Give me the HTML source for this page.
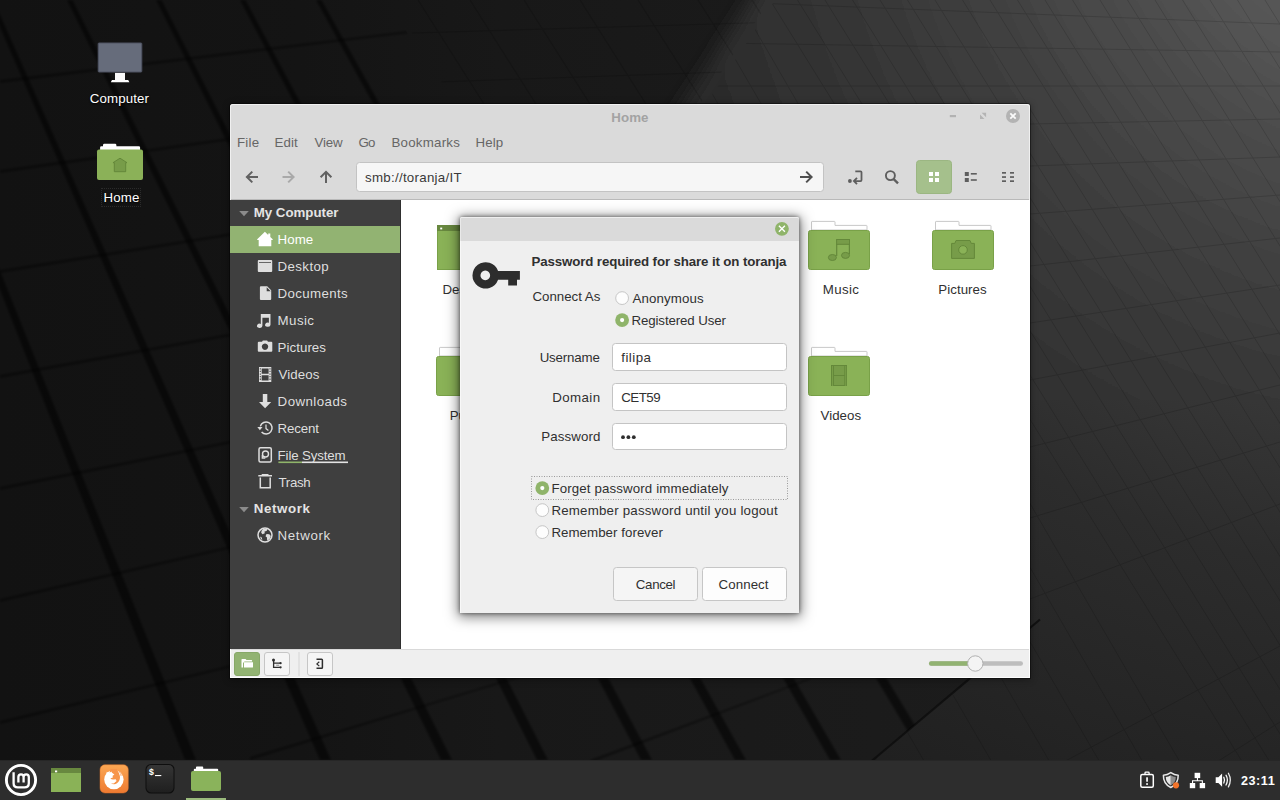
<!DOCTYPE html>
<html>
<head>
<meta charset="utf-8">
<title>Home</title>
<style>
*{box-sizing:border-box;margin:0;padding:0}
html,body{width:1280px;height:800px;overflow:hidden;background:#121212;font-family:"Liberation Sans",sans-serif;font-size:13.3px;color:#303030}
.abs{position:absolute}
#desk{position:absolute;left:0;top:0;width:1280px;height:800px;overflow:hidden;background:#121212}
#bgsvg{position:absolute;left:0;top:0}
.t{position:absolute;white-space:nowrap;line-height:16px;height:16px}
/* panel */
#panel{position:absolute;left:0;top:760px;width:1280px;height:40px;background:#2d2d2d;border-top:1px solid #262626}
/* window */
#win{position:absolute;left:230px;top:104px;width:800px;height:574px;background:#dadada;border-radius:3px 3px 0 0;box-shadow:0 0 0 1px rgba(0,0,0,.4),0 1px 7px 1px rgba(0,0,0,.32)}
#win .hl{position:absolute;left:0;top:0;width:800px;height:96px;border-radius:3px 3px 0 0;border:1px solid #f0f0f0;border-bottom:none;pointer-events:none;z-index:50}
#win .hl2{position:absolute;left:0;top:545px;width:800px;height:29px;border:1px solid #fdfdfd;border-top:none;pointer-events:none;z-index:50}
#side{position:absolute;left:0;top:96px;width:171px;height:449px;background:#3f3f3f;border-right:1px solid #2f2f2f}
#main{position:absolute;left:171px;top:96px;width:629px;height:449px;background:#fff}
#tbline{position:absolute;left:0;top:95px;width:800px;height:1px;background:#b9b9b9}
.menu{top:30px;color:#666;font-size:13.3px}
.si{left:48px;color:#dedede;font-size:13.3px}
.sh{color:#e4e4e4;font-weight:bold;font-size:13.3px}
.fl{color:#303030;font-size:13.3px}
#dlg{position:absolute;left:460px;top:217px;width:339px;height:396px;background:#efefef;border-radius:2px 2px 0 0;box-shadow:0 0 4px rgba(0,0,0,.55),0 2px 13px 2px rgba(0,0,0,.5)}
.dt{color:#303030;font-size:13.3px}
#status{position:absolute;left:0;top:545px;width:800px;height:29px;background:#efefef;border-top:1px solid #d9d9d9}
/*FIT0*/
#title{letter-spacing:0.134px!important;left:0.40px!important;top:6.00px!important}
#mFile{letter-spacing:0.291px!important;left:6.90px!important;top:31.00px!important}
#mEdit{letter-spacing:0.133px!important;left:44.40px!important;top:31.00px!important}
#mView{letter-spacing:-0.186px!important;left:84.60px!important;top:31.00px!important}
#mGo{letter-spacing:-0.960px!important;left:128.60px!important;top:31.00px!important}
#mBook{letter-spacing:0.225px!important;left:161.50px!important;top:31.00px!important}
#mHelp{letter-spacing:0.105px!important;left:245.50px!important;top:31.00px!important}
#loc{letter-spacing:0.279px!important;left:135.00px!important;top:65.50px!important}
#lblComputer{letter-spacing:0.114px!important;left:59.50px!important;top:90.50px!important}
#lblHome{letter-spacing:0.133px!important;left:61.50px!important;top:190.00px!important}
#sMyComputer{letter-spacing:-0.016px!important;left:23.70px!important;top:5.00px!important}
#sHome{letter-spacing:0.024px!important;left:47.60px!important;top:32.00px!important}
#sDesktop{letter-spacing:0.374px!important;left:47.60px!important;top:59.00px!important}
#sDocuments{letter-spacing:0.340px!important;left:47.60px!important;top:86.00px!important}
#sMusic{letter-spacing:0.420px!important;left:47.60px!important;top:113.00px!important}
#sPictures{letter-spacing:0.046px!important;left:47.60px!important;top:140.00px!important}
#sVideos{letter-spacing:0.080px!important;left:48.60px!important;top:167.00px!important}
#sDownloads{letter-spacing:0.440px!important;left:47.60px!important;top:194.00px!important}
#sRecent{letter-spacing:-0.144px!important;left:47.60px!important;top:221.00px!important}
#sFileSystem{letter-spacing:-0.144px!important;left:47.60px!important;top:248.00px!important}
#sTrash{letter-spacing:-0.380px!important;left:48.60px!important;top:275.00px!important}
#sNetworkH{letter-spacing:0.611px!important;left:23.70px!important;top:301.00px!important}
#sNetwork{letter-spacing:0.627px!important;left:47.60px!important;top:328.00px!important}
#fMusic{letter-spacing:0.320px!important;left:410.00px!important;top:82.00px!important}
#fPictures{letter-spacing:0.068px!important;left:521.50px!important;top:82.00px!important}
#fVideos{letter-spacing:0.032px!important;left:409.80px!important;top:208.00px!important}
#fDesktop{letter-spacing:-0.025px!important;left:41.40px!important;top:82.00px!important}
#fPublic{left:48.70px!important;top:208.00px!important}
#dHead{letter-spacing:-0.128px!important;left:71.50px!important;top:37.30px!important}
#dConnectAs{letter-spacing:-0.016px!important;left:72.50px!important;top:71.50px!important}
#dAnon{letter-spacing:0.125px!important;left:172.50px!important;top:74.00px!important}
#dReg{letter-spacing:-0.118px!important;left:171.50px!important;top:96.00px!important}
#dUser{letter-spacing:-0.160px!important;left:39.70px!important;top:133.00px!important}
#dDomain{letter-spacing:0.432px!important;left:40.60px!important;top:173.00px!important}
#dPass{letter-spacing:0.093px!important;left:40.50px!important;top:212.30px!important}
#dFilipa{letter-spacing:0.480px!important;left:161.25px!important;top:133.00px!important}
#dCET{letter-spacing:-0.510px!important;left:161.25px!important;top:173.00px!important}
#dForget{letter-spacing:0.131px!important;left:91.40px!important;top:264.00px!important}
#dRemU{letter-spacing:0.205px!important;left:91.40px!important;top:286.00px!important}
#dRemF{letter-spacing:0.043px!important;left:91.40px!important;top:308.00px!important}
#dCancel{letter-spacing:-0.336px!important;left:153.50px!important;top:360.00px!important}
#dConnect{letter-spacing:0.067px!important;left:241.60px!important;top:360.00px!important}
#clock{letter-spacing:0.550px!important;left:1241.00px!important;top:12.00px!important}
/*FIT1*/
</style>
</head>
<body>
<div id="desk">
<!--BG0--><svg id="bgsvg" width="1280" height="800" viewBox="0 0 1280 800">
<defs>
<radialGradient id="lg" gradientUnits="userSpaceOnUse" cx="1400" cy="-150" r="1500">
<stop offset="0" stop-color="#606060"/><stop offset=".137" stop-color="#565656"/><stop offset=".24" stop-color="#474747"/><stop offset=".30" stop-color="#3f3f3f"/><stop offset=".36" stop-color="#383838"/><stop offset=".42" stop-color="#323232"/><stop offset=".48" stop-color="#2c2c2c"/><stop offset=".59" stop-color="#262626"/><stop offset=".66" stop-color="#222222"/><stop offset=".79" stop-color="#1b1b1b"/><stop offset="1" stop-color="#141414"/>
</radialGradient>
<linearGradient id="dk" gradientUnits="userSpaceOnUse" x1="0" y1="0" x2="1000" y2="0"><stop offset="0" stop-color="#121212"/><stop offset=".3" stop-color="#141414"/><stop offset=".5" stop-color="#181818"/><stop offset="1" stop-color="#1c1c1c"/></linearGradient>
<filter id="bl" x="-10%" y="-10%" width="120%" height="120%"><feGaussianBlur stdDeviation="9"/></filter>
<filter id="b2" x="-5%" y="-5%" width="110%" height="110%"><feGaussianBlur stdDeviation="1.3"/></filter>
<clipPath id="cpT"><rect x="0" y="0" width="1280" height="400"/></clipPath>
<clipPath id="cpL"><polygon points="0,0 388,0 452,110 1000,110 1000,653 880,754 870,770 0,770"/></clipPath>
<clipPath id="cpM"><polygon points="392,0 770,0 700,104 455,104"/></clipPath>
<clipPath id="cpR"><polygon points="775,0 1280,0 1280,770 872,770 882,754 1002,653 1002,400 510,400"/></clipPath>
</defs>
<rect width="1280" height="800" fill="url(#dk)"/>
<g clip-path="url(#cpT)"><polygon points="770,-30 1320,-30 1320,430 470,430" fill="url(#lg)" filter="url(#bl)"/></g>
<polygon points="1000,400 1320,400 1320,830 830,830 880,754 1000,653" fill="url(#lg)"/>
<path d="M868 764 L880 754 L1040 619.5" stroke="#0c0c0c" stroke-width="2.2" fill="none" opacity=".8"/>
<g clip-path="url(#cpL)" filter="url(#b2)" fill="#050505" stroke="none">
<path d="M-114 0 L-108.5 0 L196 760 L185 760z" opacity=".55"/>
<path d="M-12 0 L-6.5 0 L331 760 L320 760z" opacity=".55"/>
<path d="M67 0 L72.5 0 L452 760 L441 760z" opacity=".55"/>
<path d="M156 0 L161.5 0 L548 760 L537 760z" opacity=".55"/>
<path d="M240 0 L245.5 0 L652 760 L641 760z" opacity=".55"/>
<path d="M316 0 L321.5 0 L746 760 L735 760z" opacity=".55"/>
<path d="M395 0 L400.5 0 L841 760 L830 760z" opacity=".55"/>
<path d="M470 0 L475.5 0 L936 760 L925 760z" opacity=".55"/>
<path d="M545 0 L550.5 0 L1031 760 L1020 760z" opacity=".55"/>
<path d="M620 0 L625.5 0 L1126 760 L1115 760z" opacity=".55"/>
<path d="M690 0 L695.5 0 L1221 760 L1210 760z" opacity=".55"/>
<path d="M0 80 L0 83 L800 -14.5 L800 -16z" opacity=".42"/>
<path d="M0 170 L0 173 L800 59.5 L800 58z" opacity=".42"/>
<path d="M0 270 L0 273 L800 143.5 L800 142z" opacity=".42"/>
<path d="M0 375 L0 378 L800 232.5 L800 231z" opacity=".42"/>
<path d="M0 487 L0 490 L700 348.5 L700 347z" opacity=".42"/>
<path d="M0 599 L0 602 L600 462.5 L600 461z" opacity=".42"/>
<path d="M0 721 L0 724 L500 601.5 L500 600z" opacity=".42"/>
<path d="M250 757 L250 760 L520 677.5 L520 676z" opacity=".42"/>
<path d="M590 760 L590 763 L810 679.5 L810 678z" opacity=".42"/>
</g>
<g clip-path="url(#cpM)" fill="none" stroke="#000" stroke-width="1.2" opacity=".15">
<path d="M418 0 L484 104"/>
<path d="M470 0 L536 104"/>
<path d="M524 0 L590 104"/>
<path d="M580 0 L646 104"/>
<path d="M638 0 L704 104"/>
<path d="M698 0 L764 104"/>
<path d="M752 0 L818 104"/>
<path d="M380 34 L780 22"/>
<path d="M380 84 L780 70"/>
</g>
<g clip-path="url(#cpR)" fill="none" stroke="#000" stroke-width="1" opacity=".14">
<path d="M770.0 0 L1266.0 800"/>
<path d="M797.5 0 L1293.5 800"/>
<path d="M825.0 0 L1321.0 800"/>
<path d="M852.5 0 L1348.5 800"/>
<path d="M880.0 0 L1376.0 800"/>
<path d="M907.5 0 L1403.5 800"/>
<path d="M935.0 0 L1431.0 800"/>
<path d="M962.5 0 L1458.5 800"/>
<path d="M990.0 0 L1486.0 800"/>
<path d="M1017.5 0 L1513.5 800"/>
<path d="M1045.0 0 L1541.0 800"/>
<path d="M1072.5 0 L1568.5 800"/>
<path d="M1100.0 0 L1596.0 800"/>
<path d="M1127.5 0 L1623.5 800"/>
<path d="M1155.0 0 L1651.0 800"/>
<path d="M1182.5 0 L1678.5 800"/>
<path d="M1210.0 0 L1706.0 800"/>
<path d="M1237.5 0 L1733.5 800"/>
<path d="M1265.0 0 L1761.0 800"/>
<path d="M1292.5 0 L1788.5 800"/>
<path d="M738.0 0 L1202.0 800"/>
<path d="M700.9 0 L1164.9 800"/>
<path d="M657.8 0 L1121.8 800"/>
<path d="M607.9 0 L1071.9 800"/>
<path d="M549.9 0 L1013.9 800"/>
<path d="M482.7 0 L946.7 800"/>
<path d="M404.8 0 L868.8 800"/>
<path d="M314.3 0 L778.3 800"/>
<path d="M209.4 0 L673.4 800"/>
<path d="M87.7 0 L551.7 800"/>
<path d="M-53.5 0 L410.5 800"/>
<path d="M-217.2 0 L246.8 800"/>
<path d="M700 0.8 L1280 24.0"/>
<path d="M700 42.7 L1280 52.0"/>
<path d="M700 86.0 L1280 86.0"/>
<path d="M700 130.6 L1280 119.0"/>
<path d="M700 177.9 L1280 157.0"/>
<path d="M700 239.1 L1280 195.0"/>
<path d="M700 303.0 L1280 238.0"/>
<path d="M700 373.2 L1280 285.0"/>
<path d="M700 442.0 L1280 333.0"/>
<path d="M700 528.8 L1280 385.0"/>
<path d="M700 618.3 L1280 442.0"/>
<path d="M700 724.4 L1280 504.0"/>
<path d="M700 956.9 L1280 646.0"/>
<path d="M700 1088.6 L1280 722.0"/>
<path d="M700 1240.8 L1280 800.0"/>
</g>
</svg><!--BG1-->
<!--DESKICONS0--><svg class="abs" style="left:80px;top:30px" width="90" height="160" viewBox="80 30 90 160">
<rect x="98.2" y="43" width="43.6" height="29" rx=".8" fill="#666c7b" stroke="#4e5363" stroke-width="1"/>
<rect x="115" y="72.9" width="10" height="7.6" fill="#fafafa"/>
<path d="M112 80 h16.2 l1.2 2.2 h-18.6z" fill="#fff"/>
<path d="M103 145.2 q0 -1.4 1.4 -1.4 h10.6 q1.4 0 1.4 1.4 v1.1 h22.4 q1.3 0 1.3 1.3 v3 h-40 v-3 q0 -1.3 1.3 -1.3 h1.600z" fill="#fff"/>
<rect x="97" y="149.5" width="46" height="30.5" rx="2" fill="#8bb158"/>
<path d="M120 158.2 L127 162.7 h-1.3 v9 h-11.4 v-9 h-1.300z" fill="#779c49" stroke="#64883a" stroke-width="1" stroke-linejoin="round"/>
</svg>
<div class="t" id="lblComputer" style="left:60px;top:89px;width:120px;text-align:center;color:#fff;font-size:13.300px;text-shadow:0 1px 2px #000">Computer</div>
<div class="abs" style="left:101px;top:188px;width:40px;height:19px;border:1px dotted #2b2b2b"></div>
<div class="t" id="lblHome" style="left:61px;top:189px;width:120px;text-align:center;color:#fff;font-size:13.300px;text-shadow:0 1px 2px #000">Home</div>
<!--DESKICONS1-->
<div id="win">
  <div id="tbline"></div>
  <!--WINCHROME0--><div class="t" id="title" style="left:0;top:5px;width:799px;text-align:center;font-weight:bold;color:#a3a3a3;font-size:13.300px">Home</div>
<svg class="abs" style="left:700px;top:0" width="100" height="30" viewBox="930 104 100 30">
<rect x="949.8" y="115" width="6.2" height="2.2" fill="#b2b2b2"/>
<path d="M981.6 112.8 h4.5 v4.5z M980 114.6 v4.5 h4.5z" fill="#b4b4b4"/>
<circle cx="1013" cy="116" r="7" fill="#b3b3b3"/>
<path d="M1010.3 113.3 l5.4 5.4 M1015.7 113.3 l-5.4 5.4" stroke="#fafafa" stroke-width="1.8" stroke-linecap="butt"/>
</svg>
<div class="t menu" id="mFile" style="left:9px">File</div>
<div class="t menu" id="mEdit" style="left:45px">Edit</div>
<div class="t menu" id="mView" style="left:84px">View</div>
<div class="t menu" id="mGo" style="left:129px">Go</div>
<div class="t menu" id="mBook" style="left:162px">Bookmarks</div>
<div class="t menu" id="mHelp" style="left:246px">Help</div>
<svg class="abs" style="left:0;top:56px" width="800" height="40" viewBox="230 160 800 40">
<g fill="none" stroke="#616161" stroke-width="2" stroke-linecap="butt" stroke-linejoin="miter">
<path d="M258 177 H247.5 M252.3 171.6 L246.9 177 L252.3 182.4"/>
<path d="M282.5 177 H293 M288.2 171.6 L293.6 177 L288.2 182.4" stroke="#a9a9a9"/>
<path d="M326 183 V172.5 M320.6 177.3 L326 171.9 L331.4 177.3"/>
</g>
<rect x="356.5" y="162.5" width="467" height="29" rx="3" fill="#f6f6f6" stroke="#c3c3c3"/>
<path d="M800 177 H811 M806.2 171.6 L811.6 177 L806.2 182.4" fill="none" stroke="#4f4f4f" stroke-width="2"/>
<!-- toggle location -->
<circle cx="849.9" cy="181" r="1.9" fill="#5e5e5e"/>
<path d="M855.3 171.3 h5.2 q1 0 1 1 v7.8 q0 1 -1 1 h-6.3 M857 177.9 l-3.1 3.1 l3.1 3.1" fill="none" stroke="#5e5e5e" stroke-width="1.8"/>
<!-- search -->
<circle cx="890.4" cy="175.6" r="4.5" fill="none" stroke="#5e5e5e" stroke-width="1.9"/>
<path d="M893.7 179.1 l4.3 4.3" stroke="#5e5e5e" stroke-width="2.3"/>
<!-- grid btn -->
<rect x="916.5" y="160.5" width="35" height="33" rx="3" fill="#a5c08c" stroke="#9bb682"/>
<g fill="#fff"><rect x="929" y="172" width="4" height="4"/><rect x="935" y="172" width="4" height="4"/><rect x="929" y="178" width="4" height="4"/><rect x="935" y="178" width="4" height="4"/></g>
<!-- list -->
<g fill="#5e5e5e"><rect x="964.8" y="172" width="4" height="4"/><rect x="964.8" y="178" width="4" height="4"/><rect x="970.8" y="173" width="6" height="1.6"/><rect x="970.8" y="179.2" width="6" height="1.6"/></g>
<!-- compact -->
<g fill="#5e5e5e"><rect x="1002" y="172" width="4" height="1.7"/><rect x="1002" y="176.2" width="4" height="1.7"/><rect x="1002" y="180.3" width="4" height="1.7"/><rect x="1010" y="172" width="4" height="1.7"/><rect x="1010" y="176.2" width="4" height="1.7"/><rect x="1010" y="180.3" width="4" height="1.7"/></g>
</svg>
<div class="t" id="loc" style="left:135px;top:65px;color:#3a3a3a;font-size:13.300px">smb://toranja/IT</div>
<!--WINCHROME1-->
  <div id="side"><!--SIDEBAR0--><div class="abs" style="left:0;top:26px;width:170px;height:27px;background:#92b372"></div>
<svg class="abs" style="left:0;top:0" width="170" height="360" viewBox="230 200 170 360">
<path d="M239.2 211 h9.6 l-4.8 5.2z" fill="#8b8b8b"/>
<path d="M239.2 507 h9.6 l-4.8 5.2z" fill="#8b8b8b"/>
<!-- home -->
<path d="M264.9 231.8 l3.3 3.1 v-1.3 h2.1 v3.3 l2.4 2.3 v.7 h-1.4 v6.3 h-12.6 v-6.3 h-1.5 v-.7z" fill="#fff"/>
<g fill="#dedede">
<!-- desktop -->
<path d="M258.8 260 h12.4 q1 0 1 1 v10 q0 1 -1 1 h-12.4 q-1 0 -1 -1 v-10 q0 -1 1 -1z M259 262.3 v0.8 h12 v-.8z" fill-rule="evenodd"/>
<!-- documents -->
<path d="M260.9 286.3 h6.3 l4 4 v8.7 q0 1 -1 1 h-9.3 q-1 0 -1 -1 v-11.7 q0 -1 1 -1z M266.7 287.3 v4 h4z" fill-rule="evenodd"/>
<!-- music -->
<path d="M260.8 314 h9.7 v10.7 a2.7 2.1 0 1 1 -1.6 -1.9 v-5 h-6.5 v8 a2.7 2.1 0 1 1 -1.6 -1.900z"/>
<!-- pictures -->
<path d="M262 341.8 l.9 -1.4 h4.2 l.9 1.4 h3.3 q1 0 1 1 v8 q0 1 -1 1 h-12.5 q-1 0 -1 -1 v-8 q0 -1 1 -1z M265 343.5 a3.2 3.2 0 1 0 .01 0z" fill-rule="evenodd"/>
<!-- videos -->
<path d="M259 367 h12.3 v15 h-12.300z M261.7 368.4 v5.4 h6.9 v-5.400z M261.7 375.2 v5.4 h6.9 v-5.400z M259.8 368.2 v1.3 h1 v-1.300z M259.8 370.8 v1.3 h1 v-1.300z M259.8 373.4 v1.3 h1 v-1.300z M259.8 376 v1.3 h1 v-1.300z M259.8 378.6 v1.3 h1 v-1.300z M269.5 368.2 v1.3 h1 v-1.300z M269.5 370.8 v1.3 h1 v-1.300z M269.5 373.4 v1.3 h1 v-1.300z M269.5 376 v1.3 h1 v-1.300z M269.5 378.6 v1.3 h1 v-1.300z" fill-rule="evenodd"/>
<!-- downloads -->
<path d="M262.8 394 h4.5 v8 h3.9 l-6.1 6.2 l-6.1 -6.2 h3.800z"/>
<!-- trash lid -->
<path d="M258.3 475 h13.7 v1.5 h-13.700z M261.7 474 h6.8 v1.2 h-6.800z"/>
</g>
<g fill="none" stroke="#dedede" stroke-width="1.5">
<!-- recent -->
<path d="M260.3 426.4 a6 6 0 1 1 1.3 5.6" />
<path d="M266 424.6 v4 l2.4 1.8" stroke-width="1.2"/>
<!-- filesystem -->
<rect x="259" y="447.8" width="12.3" height="14.3" rx="1.5"/>
<circle cx="265.5" cy="454" r="3" stroke-width="1.4"/><path d="M262.3 455 v3 h3" stroke-width="1.3"/>
<!-- trash body -->
<path d="M260.3 477.5 v10.3 h9.9 v-10.3"/>
<!-- network -->
<circle cx="265" cy="535.1" r="7"/>
</g>
<path d="M257.3 427 h5.2 l-2.6 3.300z" fill="#dedede"/>
<path d="M263.2 529 q2.5 -.8 4.3 .3 l-1 1.8 l-2 .4 l.3 1.7 l-2.3 1 l-1.3 -1.4 q0 -2.5 2 -3.800z M266.5 534 l2.8 .3 l1.5 1.6 l-1 2.8 l-2.2 2 q-1 -1.5 -.6 -3.2 l-1.5 -1.200z M260 536.5 l1.8 1 l.5 2.5 q-1.8 -1 -2.3 -3.500z" fill="#dedede"/>
<!-- filesystem usage bar -->
<rect x="278.4" y="461.5" width="23.6" height="1.6" fill="#8fb46a"/>
<rect x="302" y="461.5" width="46" height="1.6" fill="#e4e4e4"/>
</svg>
<div class="t sh" id="sMyComputer" style="left:24px;top:4px">My Computer</div>
<div class="t si" id="sHome" style="top:31px;color:#fff">Home</div>
<div class="t si" id="sDesktop" style="top:58px">Desktop</div>
<div class="t si" id="sDocuments" style="top:85px">Documents</div>
<div class="t si" id="sMusic" style="top:112px">Music</div>
<div class="t si" id="sPictures" style="top:139px">Pictures</div>
<div class="t si" id="sVideos" style="top:166px">Videos</div>
<div class="t si" id="sDownloads" style="top:193px">Downloads</div>
<div class="t si" id="sRecent" style="top:220px">Recent</div>
<div class="t si" id="sFileSystem" style="top:247px">File System</div>
<div class="t si" id="sTrash" style="top:274px">Trash</div>
<div class="t sh" id="sNetworkH" style="left:24px;top:300px">Network</div>
<div class="t si" id="sNetwork" style="top:327px">Network</div>
<!--SIDEBAR1--></div>
  <div id="main"><!--MAIN0--><svg class="abs" style="left:0;top:0" width="629" height="448" viewBox="401 200 629 448">
<defs>
<g id="fold">
<path d="M4.1 -8.6 q-.6 0 -.6 .6 v8 h55.5 v-4 q0 -.6 -.6 -.6 h-31.4 v-3.4 q0 -.6 -.6 -.6z" fill="#fff" stroke="#c9c9c9" stroke-width="1"/>
<rect x=".5" y=".5" width="61" height="39" rx="2" fill="#8ab257" stroke="#79a148" stroke-width="1"/>
</g>
</defs>
<!-- Desktop -->
<rect x="437.5" y="225.5" width="61" height="44" fill="#8ab257" stroke="#79a148"/>
<rect x="437" y="225" width="62" height="6" fill="#68883f"/>
<rect x="440.2" y="227.6" width="2" height="1.8" fill="#fff"/>
<!-- Music -->
<use href="#fold" x="808" y="230"/>
<g fill="#779c49" stroke="#64883a" stroke-width="1">
<rect x="836.6" y="239.5" width="12.9" height="4.8"/>
<path d="M836.7 244 V256 M849.4 244 V254.2" stroke-width="1.2" fill="none"/>
<ellipse cx="832.4" cy="257.5" rx="4" ry="3"/><ellipse cx="845.5" cy="255.4" rx="4" ry="3"/>
</g>
<!-- Pictures -->
<use href="#fold" x="932" y="230"/>
<path d="M951.6 243.4 h3.2 l1.2 -2.9 h14 l1.2 2.9 h3.2 v15 h-22.800z" fill="#779c49" stroke="#64883a" stroke-width="1" stroke-linejoin="round"/>
<circle cx="963" cy="249.9" r="4.3" fill="#8ab257" stroke="#64883a" stroke-width="1"/>
<!-- Public (mostly hidden) -->
<use href="#fold" x="436" y="356"/>
<!-- Videos -->
<use href="#fold" x="808" y="356"/>
<rect x="831" y="365" width="16" height="21" fill="#64883a"/>
<rect x="834" y="366" width="10.3" height="9" fill="#779c49"/><rect x="834" y="376" width="10.3" height="9" fill="#779c49"/>
<path d="M832.5 366.5 V386 M845.7 366.5 V386" stroke="#8ab257" stroke-width="1" stroke-dasharray="1 1" fill="none"/>
</svg>
<div class="t fl" id="fDesktop" style="left:42px;top:81px">Desktop</div>
<div class="t fl" id="fMusic" style="left:409px;top:81px;width:60px;text-align:center">Music</div>
<div class="t fl" id="fPictures" style="left:522px;top:81px;width:80px;text-align:center">Pictures</div>
<div class="t fl" id="fPublic" style="left:49px;top:207px">Public</div>
<div class="t fl" id="fVideos" style="left:409px;top:207px;width:60px;text-align:center">Videos</div>
<!--MAIN1--></div>
  <div id="status"><!--STATUS0--><svg class="abs" style="left:0;top:-2px" width="800" height="30" viewBox="230 648 800 30">
<rect x="234.5" y="652.5" width="25" height="23" rx="2.5" fill="#92b372" stroke="#87a868"/>
<path d="M241.5 659.6 q0 -.6 .6 -.6 h3.4 l1 1 h5 q.6 0 .6 .6 v.9 h-7.6 l-1.5 1.5 v4.4 h-1.500z M244 662.2 h9 v4.7 q0 .6 -.6 .6 h-8.400z" fill="#fff"/>
<rect x="264.5" y="652.5" width="25" height="23" rx="2.5" fill="#f5f5f5" stroke="#c6c6c6"/>
<g fill="none" stroke="#2e2e2e" stroke-width="1.3"><path d="M273.6 660.5 v6.8 h6.6 M273.6 663.2 h6.6"/><path d="M276.2 665.2 h3" stroke="#8a8a8a" stroke-width="1"/></g><circle cx="273.5" cy="660.1" r="1.5" fill="#2e2e2e"/><circle cx="280.6" cy="663.2" r="1.1" fill="#2e2e2e"/><circle cx="280.6" cy="667.3" r="1.1" fill="#2e2e2e"/>
<rect x="298.5" y="652" width="1" height="24" fill="#d6d6d6"/>
<rect x="307.5" y="652.5" width="25" height="23" rx="2.5" fill="#f5f5f5" stroke="#c6c6c6"/>
<path d="M316.5 659.3 h5.1 q.8 0 .8 .8 v7.4 q0 .8 -.8 .8 h-5.1" fill="none" stroke="#2e2e2e" stroke-width="1.5"/>
<path d="M319.3 661.7 l-2.4 2.2 l2.4 2.2" fill="none" stroke="#2e2e2e" stroke-width="1.2"/>
<rect x="929" y="661.3" width="94" height="4.5" rx="2.2" fill="#bdbdbd"/>
<rect x="929" y="661.3" width="46" height="4.5" rx="2.2" fill="#92b372"/>
<circle cx="975.3" cy="663.5" r="7.7" fill="#f4f4f4" stroke="#b0b0b0" stroke-width="1"/>
</svg>
<!--STATUS1--></div>
  <div class="hl"></div><div class="hl2"></div>
</div>
<!--DIALOG0--><div id="dlg">
<div class="abs" style="left:0;top:0;width:339px;height:24px;background:#dadada;border-radius:2px 2px 0 0;border-top:1px solid #efefef;border-left:1px solid #e9e9e9"></div><div class="abs" style="left:0;top:24px;width:1px;height:372px;background:#f8f8f8"></div>
<svg class="abs" style="left:0;top:0" width="339" height="396" viewBox="460 217 339 396">
<circle cx="781.9" cy="228.8" r="6.9" fill="#8fb46a"/>
<path d="M778.9 225.8 l6 6 M784.9 225.8 l-6 6" stroke="#fff" stroke-width="1.35"/>
<!-- key -->
<path d="M498.1 271 A13.2 13.2 0 1 0 498.1 279.8 H508.2 V285.6 H517 V279.8 H519.9 V271z M485.3 270.6 a4.8 4.8 0 1 1 -.01 0z" fill="#2d2d2d" fill-rule="evenodd"/>
<!-- radios -->
<circle cx="622.1" cy="298.1" r="6.4" fill="#fdfdfd" stroke="#c6c6c6"/>
<circle cx="622.1" cy="320.1" r="6.9" fill="#8fb46a"/><circle cx="622.1" cy="320.1" r="2.1" fill="#fff"/>
<!-- entries -->
<rect x="612.5" y="343.5" width="174" height="27" rx="3" fill="#fff" stroke="#c4c4c4"/>
<rect x="612.5" y="383.5" width="174" height="27" rx="3" fill="#fff" stroke="#c4c4c4"/>
<rect x="612.5" y="423.5" width="174" height="26" rx="3" fill="#fff" stroke="#c4c4c4"/>
<circle cx="623" cy="437.2" r="1.9" fill="#2e2e2e"/><circle cx="628.4" cy="437.2" r="1.9" fill="#2e2e2e"/><circle cx="633.8" cy="437.2" r="1.9" fill="#2e2e2e"/>
<!-- focus rect -->
<rect x="531.5" y="476.5" width="256" height="23" fill="none" stroke="#9a9a9a" stroke-dasharray="1 1.5"/>
<circle cx="542.3" cy="488.1" r="6.9" fill="#8fb46a"/><circle cx="542.3" cy="488.1" r="2.1" fill="#fff"/>
<circle cx="542.3" cy="510.1" r="6.4" fill="#fdfdfd" stroke="#c6c6c6"/>
<circle cx="542.3" cy="532.1" r="6.4" fill="#fdfdfd" stroke="#c6c6c6"/>
<!-- buttons -->
<rect x="613.5" y="567.5" width="84" height="33" rx="3" fill="#f5f5f5" stroke="#c6c6c6"/>
<rect x="702.5" y="567.5" width="84" height="33" rx="3" fill="#fdfdfd" stroke="#c6c6c6"/>
</svg>
<div class="t dt" id="dHead" style="left:72px;top:36px;font-weight:bold">Password required for share it on toranja</div>
<div class="t dt" id="dConnectAs" style="left:72px;top:70px">Connect As</div>
<div class="t dt" id="dAnon" style="left:172px;top:73px">Anonymous</div>
<div class="t dt" id="dReg" style="left:172px;top:95px">Registered User</div>
<div class="t dt" id="dUser" style="left:40px;top:132px;width:100px;text-align:right">Username</div>
<div class="t dt" id="dDomain" style="left:40px;top:172px;width:100px;text-align:right">Domain</div>
<div class="t dt" id="dPass" style="left:40px;top:211px;width:100px;text-align:right">Password</div>
<div class="t dt" id="dFilipa" style="left:161px;top:132px">filipa</div>
<div class="t dt" id="dCET" style="left:161px;top:172px">CET59</div>
<div class="t dt" id="dForget" style="left:92px;top:263px">Forget password immediately</div>
<div class="t dt" id="dRemU" style="left:92px;top:285px">Remember password until you logout</div>
<div class="t dt" id="dRemF" style="left:92px;top:307px">Remember forever</div>
<div class="t dt" id="dCancel" style="left:154px;top:359px;width:84px;text-align:center">Cancel</div>
<div class="t dt" id="dConnect" style="left:243px;top:359px;width:84px;text-align:center">Connect</div>
</div>
<!--DIALOG1-->
<div id="panel"><!--PANEL0--><svg class="abs" style="left:0;top:-1px" width="1280" height="41" viewBox="0 760 1280 41">
<defs>
<linearGradient id="ffg" x1="0" y1="0" x2="0" y2="1"><stop offset="0" stop-color="#fba753"/><stop offset="1" stop-color="#ee7a31"/></linearGradient>
<linearGradient id="tmg" x1="0" y1="0" x2="0" y2="1"><stop offset="0" stop-color="#353535"/><stop offset="1" stop-color="#1f1f1f"/></linearGradient>
</defs>
<!-- mint menu -->
<circle cx="21" cy="780" r="14.6" fill="none" stroke="#fff" stroke-width="2.9"/>
<path d="M13.6 772.2 V783.2 Q13.6 787.4 17.8 787.4 H24.6 Q28.8 787.4 28.8 783.2 V777 Q28.8 774.3 26.2 774.3 Q23.6 774.3 23.6 777 V782.6 M23.6 777 Q23.6 774.3 21 774.3 Q18.4 774.3 18.4 777 V782.6" fill="none" stroke="#fff" stroke-width="2.3" stroke-linecap="butt" stroke-linejoin="round"/>
<!-- show desktop -->
<rect x="51" y="768" width="30" height="24" fill="#8ab257"/>
<rect x="51" y="768" width="30" height="5" fill="#68883f"/>
<rect x="55" y="770.5" width="2.2" height="1.8" fill="#fff"/>
<!-- firefox -->
<rect x="100" y="764.7" width="28.3" height="28.3" rx="5" fill="url(#ffg)" stroke="#d9702a" stroke-width=".5"/>
<circle cx="113.9" cy="779.6" r="9.7" fill="#fff"/>
<path d="M111.7 772.6 L114.4 774.4 L112.4 775.9 L113.1 777.3 L110.3 778.6 Q112.4 780.2 115.6 779 Q116.6 781.4 114 783.2 Q111.6 783.9 110.3 782.4 Q113.4 785.6 117 783.3 Q120.6 780.4 119.9 776 Q119.3 773 117.8 770.9 L116.8 769 L110.5 769 L109.5 772.4z" fill="#f7954a"/>
<path d="M110 780.7 Q113 782.1 116.3 780 L116.4 781.2 Q113 783.4 110.2 781.9z" fill="#fff"/>
<path d="M106.3 774.5 L106.8 771.7 L108.6 773.200z M109.3 773 L111.8 771.6 L111.7 773.700z" fill="#fff"/>
<path d="M119.2 771.6 q1.5 1.8 1.8 4.4 M120.6 771.3 q1.6 2 1.7 4.6" stroke="#f8a060" stroke-width=".7" fill="none"/>
<!-- terminal -->
<rect x="145.5" y="764" width="29" height="29.5" rx="5.5" fill="#0e0e0e"/>
<rect x="146.5" y="765" width="27" height="27.5" rx="4.8" fill="url(#tmg)"/>
<text x="148.7" y="775.3" font-family="Liberation Mono" font-weight="bold" font-size="8.8" fill="#fff">$</text>
<rect x="155" y="775" width="6.3" height="1.1" fill="#fff"/>
<!-- files -->
<path d="M196 767.2 q0 -0.8 .8 -.8 h5.6 q.8 0 .8 .8 v1.5 h14 q1 0 1 1 v2 h-24.4 v-2 q0 -1 1 -1 h1.200z" fill="#fff"/>
<rect x="191" y="771" width="30" height="20" rx="2" fill="#8ab35b"/>
<rect x="186" y="798" width="40" height="3" fill="#9aba7c"/>
<!-- tray: clipboard -->
<g fill="none" stroke="#fff" stroke-width="1.5">
<rect x="1140.8" y="774.5" width="12.5" height="12.8" rx="1.5"/>
<path d="M1145 774.3 v-1.3 q0 -.8 .8 -.8 h2.5 q.8 0 .8 .8 v1.3" stroke-width="1.3"/>
</g>
<rect x="1146.2" y="777.3" width="1.7" height="4.4" fill="#fff"/><rect x="1146.2" y="783.2" width="1.7" height="1.7" fill="#fff"/>
<!-- shield -->
<path d="M1170.8 772.6 q3.5 2.4 7.4 2.6 q.3 8.5 -7.4 12.3 q-7.7 -3.8 -7.4 -12.3 q3.9 -.2 7.4 -2.600z" fill="none" stroke="#e8e8e8" stroke-width="1.5" stroke-linejoin="round"/>
<path d="M1170.8 775.2 q-2.3 1.5 -5 1.8 q0 5.5 5 8.400z" fill="#e6e6e6"/>
<path d="M1170.8 775.2 q2.3 1.5 5 1.8 q0 5.5 -5 8.400z" fill="#8d8d8d"/>
<circle cx="1176" cy="785.3" r="3.1" fill="#f37329"/>
<!-- network -->
<g fill="#fff"><rect x="1194.6" y="772.8" width="5.6" height="5.3"/><rect x="1189.8" y="783" width="5.4" height="5.2"/><rect x="1199.7" y="783" width="5.4" height="5.2"/>
<path d="M1196.9 778 h1.1 v2.2 h4.9 v3 h-1.1 v-1.9 h-8.7 v1.9 h-1.1 v-3 h4.900z"/></g>
<!-- volume -->
<path d="M1215.7 777.2 h2.7 l3.7 -3.7 v13.2 l-3.7 -3.7 h-2.700z" fill="#fff"/>
<g fill="none" stroke="#fff" stroke-width="1.3" stroke-linecap="round"><path d="M1223.8 777.2 q1.5 2.8 0 5.8"/><path d="M1226 775.2 q2.8 4.8 0 9.8" opacity=".95"/><path d="M1228.4 773.3 q3.8 6.7 0 13.6" opacity=".9"/></g>
</svg>
<div class="t" id="clock" style="left:1241px;top:12px;color:#fff;font-weight:bold;font-size:12.600px;letter-spacing:0.150px">23:11</div>
<!--PANEL1--></div>
</div>
</body>
</html>
